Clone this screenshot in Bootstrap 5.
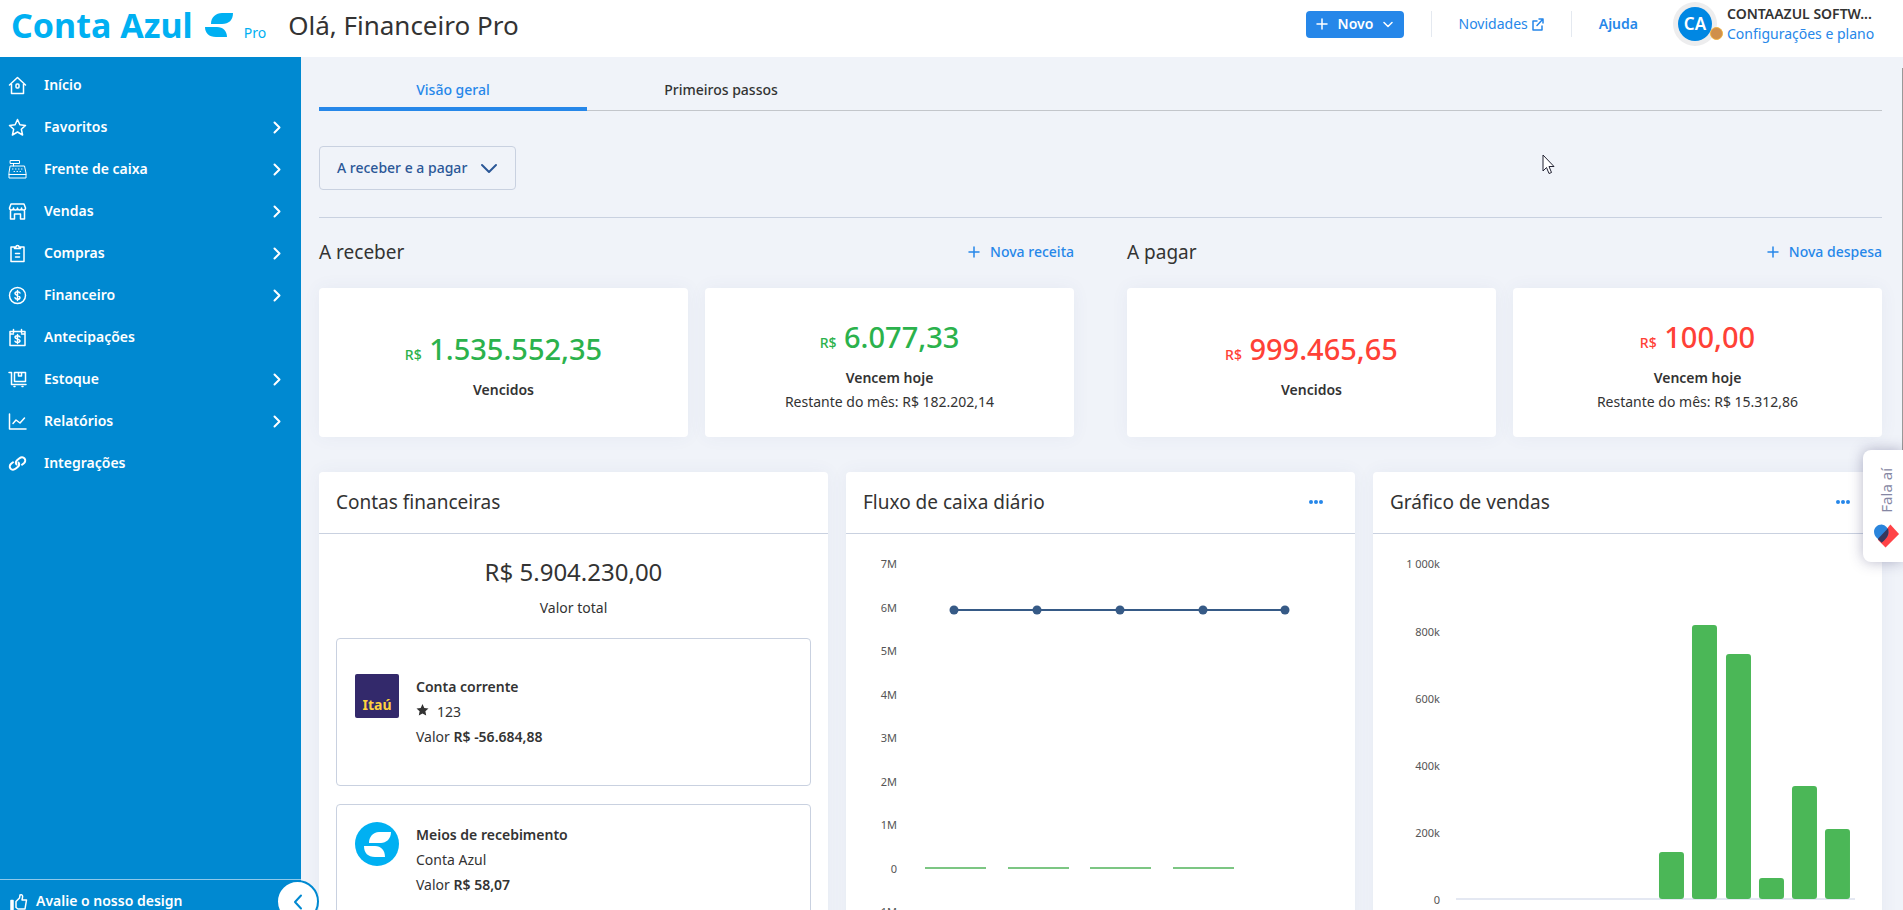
<!DOCTYPE html>
<html lang="pt-BR">
<head>
<meta charset="utf-8">
<meta name="viewport" content="width=device-width, initial-scale=1">
<title>Conta Azul Pro</title>
<link href="https://cdn.jsdelivr.net/npm/bootstrap@5.3.0/dist/css/bootstrap.min.css" rel="stylesheet">
<style>
  :root { --ca-blue:#2687e9; --ca-side:#0089d1; --ca-logo:#00b0f2; --ca-line:#c9d1e0; --ca-ink:#333; }
  body { font-family:"Noto Sans","Open Sans",sans-serif; font-size:14px; line-height:24px; color:var(--ca-ink); background:#f0f3f9; }
  a { color:var(--ca-blue); text-decoration:none; }
  svg { display:block; flex:none; }
  .ico { fill:none; stroke:currentColor; stroke-width:1.5; stroke-linecap:round; stroke-linejoin:round; }
  .ico.bold { stroke-width:2; }
  .ico.fine { stroke-width:1; }
  .topbar { height:57px; padding:0 21px 0 11px; background:#fff; }
  .brand { color:var(--ca-logo); height:50px; }
  .brand-name { font-size:34px; font-weight:700; line-height:50px; }
  .brand svg { margin-left:12px; }
  .brand-plan { font-size:14px; line-height:14px; margin:15px 0 0 11px; }
  .greeting { font-size:26px; line-height:50px; margin:0 0 0 22px; font-weight:400; }
  .top-tools { height:48px; }
  .btn-new { height:27px; width:98px; padding:0 10px; background:var(--ca-blue); color:#fff; font-size:14px; font-weight:600; line-height:20px; border-radius:4px; border:0; }
  .split { width:1px; height:26px; margin:0 27px; background:#e4e9f0; }
  .help { font-weight:600; margin-right:35px; }
  .avatar { width:44px; height:44px; border-radius:50%; background:#ededee; }
  .avatar-in { width:34px; height:34px; border-radius:50%; background:#0087e3; color:#fff; font-weight:600; font-size:17px; }
  .avatar-dot { width:13px; height:13px; right:-6px; bottom:6px; border-radius:50%; background:#cf8f4c; border:1px solid #f0b040; }
  .account { line-height:20px; width:155px; margin-left:10px; }
  .shell { min-height:0; }
  .sidebar { width:301px; background:var(--ca-side); }
  .side-nav { padding-top:7px; }
  .side-nav a { height:42px; padding:0 20px 0 8px; color:#fff; font-weight:600; gap:17px; }
  .side-foot { height:31px; border-top:1px solid #8fc9ea; padding:9px 0 0 9px; color:#fff; font-weight:600; gap:8px; }
  .side-foot a { color:#fff; }
  .collapse-btn { width:43px; height:43px; right:-18px; top:0; border-radius:50%; border:2px solid var(--ca-side); background:#fff; color:var(--ca-side); padding:0; z-index:3; }
  .content { padding:0 21px 0 18px; overflow-y:auto; scrollbar-width:none; }
  .content::-webkit-scrollbar { display:none; }
  .view-tabs { height:54px; border-bottom:1px solid #c3c6cb; }
  .view-tabs button { width:268px; height:54px; border:0; border-bottom:4px solid transparent; background:none; padding:15px 0 0; font-weight:500; color:var(--ca-ink); }
  .view-tabs button.current { color:var(--ca-blue); border-color:var(--ca-blue); }
  .btn-filter { height:44px; width:197px; margin:35px 0 27px; border:1px solid var(--ca-line); border-radius:4px; color:#2b5797; font-weight:500; font-size:14px; padding:0 17px; background:none; }
  .rule { height:1px; background:var(--ca-line); }
  .money-groups { gap:53px; margin-bottom:35px; }
  .group-head { height:70px; padding-bottom:2px; }
  .group-head h2, .panel-head h2 { font-size:19px; line-height:24px; font-weight:400; margin:0; }
  .group-head a { font-weight:500; gap:10px; }
  .money-cards { gap:17px; }
  .money-card { flex:1 1 0; height:149px; background:#fff; border-radius:4px; padding-top:7px; box-shadow:0 0 18px rgba(60,80,140,.06); }
  .amount { font-size:29px; line-height:36px; font-weight:500; margin-bottom:5px; }
  .amount span { font-size:14px; }
  .gain { color:#2bb24c; } .loss { color:#ff4136; }
  .panels { --bs-gutter-x:18px; }
  .panel { background:#fff; border-radius:4px; box-shadow:0 0 18px rgba(60,80,140,.06); min-height:560px; }
  .panel-head { height:62px; padding:0 30px 2px 17px; border-bottom:1px solid var(--ca-line); }
  .panel-head button { border:0; background:none; padding:0; color:var(--ca-blue); }
  .total { font-size:24px; line-height:32px; padding-top:22px; margin-bottom:8px; }
  .account-box { margin:18px 17px 0; border:1px solid var(--ca-line); border-radius:4px; padding:17px 18px; line-height:25px; gap:17px; }
  .account-box.roomy { padding:35px 18px 36px; }
  .bank { width:44px; height:44px; background:#33296b; color:#ffd23f; font:700 14px/18px "Noto Sans",sans-serif; border-radius:2px; padding-bottom:4px; }
  .chart text { font-size:11px; fill:#555; text-anchor:end; }
  .feedback { right:0; top:450px; width:40px; height:112px; background:#fff; border:0; border-radius:8px 0 0 8px; box-shadow:0 0 14px rgba(50,50,100,.35); padding:18px 0 14px 6px; color:#8587a3; font-size:15px; z-index:5; }
  .feedback span { writing-mode:vertical-rl; transform:rotate(180deg); }
  .thumb { right:0; top:68px; width:1px; height:382px; background:#999; }
  .pointer { left:1542px; top:154px; z-index:6; }
</style>
</head>
<body class="vh-100 d-flex flex-column overflow-hidden position-relative">
<header class="topbar d-flex align-items-start flex-shrink-0">
  <a class="brand d-flex align-items-center" href="#">
    <span class="brand-name">Conta Azul</span>
    <svg width="28" height="26" viewBox="0 0 28 26" fill="currentColor"><path d="M6 12C6 5 11 1 17 1h11c0 7-4 11-11 11zM0 15h12c6 0 10 4 10 10H11C4 25 0 21 0 15z"/></svg>
    <span class="brand-plan">Pro</span>
  </a>
  <h1 class="greeting">Olá, Financeiro Pro</h1>
  <div class="top-tools d-flex align-items-center ms-auto">
    <button class="btn-new d-flex align-items-center justify-content-between" type="button">
      <svg width="12" height="12" viewBox="0 0 12 12" class="ico"><path d="M6 1v10M1 6h10"/></svg>Novo
      <svg width="10" height="7" viewBox="0 0 10 7" class="ico"><path d="M1 1.500l4 4 4-4"/></svg>
    </button>
    <span class="split"></span>
    <a href="#" class="d-flex align-items-center gap-1">Novidades
      <svg width="12" height="13" viewBox="0 0 12 13" class="ico"><path d="M5 3H1v9h9V8M7 1h4v4M11 1L5 7.500"/></svg></a>
    <span class="split"></span>
    <a href="#" class="help">Ajuda</a>
    <span class="avatar d-flex align-items-center justify-content-center position-relative">
      <span class="avatar-in d-flex align-items-center justify-content-center">CA</span>
      <span class="avatar-dot position-absolute"></span>
    </span>
    <div class="account text-nowrap"><div class="fw-semibold">CONTAAZUL SOFTW...</div><a href="#">Configurações e plano</a></div>
  </div>
</header>

<div class="shell d-flex flex-grow-1">
  <aside class="sidebar d-flex flex-column flex-shrink-0">
    <nav class="side-nav flex-grow-1">
      <a href="#" class="d-flex align-items-center"><svg width="19" height="19" viewBox="0 0 19 19" class="ico"><path d="M1.500 9l8-7.500 8 7.500M3.500 8v9.500h12V8"/><rect x="8" y="8" width="3" height="4" rx="1"/></svg><span>Início</span></a>
      <a href="#" class="d-flex align-items-center"><svg width="19" height="19" viewBox="0 0 19 19" class="ico"><path d="M9.500 1.500l2.400 5.300 5.600.6-4.200 3.800 1.300 5.800-5.100-3-5.100 3 1.300-5.800L1.500 7.400l5.600-.6z"/></svg><span class="flex-grow-1">Favoritos</span><svg width="8" height="13" viewBox="0 0 8 13" class="ico bold"><path d="M1.500 1.500l5 5-5 5"/></svg></a>
      <a href="#" class="d-flex align-items-center"><svg width="19" height="19" viewBox="0 0 19 19" class="ico fine"><path d="M2.500 .5h9v3h-9zM5.500 3.500v2.500M2.500 6h14l1.500 7v5h-17v-5zM1 14.500h17M4.500 9h.5M7.500 9h.5M10.500 9h.5M13.500 9h.5M6 11.500h.5M9 11.500h.5M12 11.500h.5"/></svg><span class="flex-grow-1">Frente de caixa</span><svg width="8" height="13" viewBox="0 0 8 13" class="ico bold"><path d="M1.500 1.500l5 5-5 5"/></svg></a>
      <a href="#" class="d-flex align-items-center"><svg width="19" height="19" viewBox="0 0 19 19" class="ico"><path d="M3 2h13l1.500 4c0 1.500-1 2-2 2s-2-.5-2-2c0 1.500-1 2-2 2s-2-.5-2-2c0 1.500-1 2-2 2s-2-.5-2-2c0 1.500-1 2-2 2s-2-.5-2-2zM2.500 8.500v8.500h4v-5h6v5h4v-8.500"/></svg><span class="flex-grow-1">Vendas</span><svg width="8" height="13" viewBox="0 0 8 13" class="ico bold"><path d="M1.500 1.500l5 5-5 5"/></svg></a>
      <a href="#" class="d-flex align-items-center"><svg width="19" height="19" viewBox="0 0 19 19" class="ico"><path d="M6 3H3v14.500h13V3h-3M6.500 4.500V3h1.500c0-2 3-2 3 0h1.500v1.500zM7.500 9.500h4M7.500 13h4"/></svg><span class="flex-grow-1">Compras</span><svg width="8" height="13" viewBox="0 0 8 13" class="ico bold"><path d="M1.500 1.500l5 5-5 5"/></svg></a>
      <a href="#" class="d-flex align-items-center"><svg width="19" height="19" viewBox="0 0 19 19" class="ico"><circle cx="9.500" cy="9.500" r="8"/><path d="M12 7c-.5-1-1.300-1.300-2.500-1.300C8 5.700 7 6.300 7 7.500c0 2.500 5 1.500 5 4 0 1.200-1 1.800-2.500 1.800-1.300 0-2.200-.5-2.500-1.500M9.500 4.500v10"/></svg><span class="flex-grow-1">Financeiro</span><svg width="8" height="13" viewBox="0 0 8 13" class="ico bold"><path d="M1.500 1.500l5 5-5 5"/></svg></a>
      <a href="#" class="d-flex align-items-center"><svg width="19" height="19" viewBox="0 0 19 19" class="ico"><path d="M2 3.500h15v14H2zM5.500 1.500v3M13.500 1.500v3M2 6h3.500M13.500 6H17M12 9c-.5-1-1.300-1.200-2.500-1.200-1.500 0-2.500.5-2.500 1.500 0 2.300 5 1.400 5 3.500 0 1.200-1 1.600-2.500 1.600-1.300 0-2.200-.4-2.500-1.200M9.500 6.500v9"/></svg><span>Antecipações</span></a>
      <a href="#" class="d-flex align-items-center"><svg width="19" height="19" viewBox="0 0 19 19" class="ico"><path d="M1 2.500h2.500v12H18M6.500 2.500h11v9h-11zM10.500 2.500v3.500h3V2.500"/><path d="M6 16.500h1M14 16.500h1"/></svg><span class="flex-grow-1">Estoque</span><svg width="8" height="13" viewBox="0 0 8 13" class="ico bold"><path d="M1.500 1.500l5 5-5 5"/></svg></a>
      <a href="#" class="d-flex align-items-center"><svg width="19" height="19" viewBox="0 0 19 19" class="ico"><path d="M1.500 2v15H18M5 11.500l3-3.500 4 3 4.500-5"/></svg><span class="flex-grow-1">Relatórios</span><svg width="8" height="13" viewBox="0 0 8 13" class="ico bold"><path d="M1.500 1.500l5 5-5 5"/></svg></a>
      <a href="#" class="d-flex align-items-center"><svg width="19" height="19" viewBox="0 0 19 19" class="ico bold"><path d="M10.500 8.500c1.200 1.700.5 3.400-.8 4.500l-2.200 1.800c-1.600 1.300-3.800 1.200-5-.2s-.9-3.500.6-4.800L5 8.300"/><path d="M8.500 10.500c-1.200-1.700-.5-3.400.8-4.500l2.200-1.800c1.600-1.300 3.800-1.200 5 .2s.9 3.500-.6 4.800L14 10.700"/></svg><span>Integrações</span></a>
    </nav>
    <div class="side-foot d-flex position-relative">
      <svg class="mt-1" width="19" height="19" viewBox="0 0 19 19"><g class="ico"><path d="M7 8.500l3.500-3.500L11 2c2-1 3 .5 2.500 2.500L13 7h4.500l-1.500 9H9l-2-1.500z"/><path d="M2 7.500h2v9H2z" fill="currentColor"/></g></svg>
      <a href="#">Avalie o nosso design</a>
      <button class="collapse-btn position-absolute d-flex align-items-center justify-content-center" type="button" aria-label="Recolher menu"><svg width="10" height="16" viewBox="0 0 10 16" class="ico bold"><path d="M8 1.500L2 8l6 6.500"/></svg></button>
    </div>
  </aside>

  <main class="content flex-grow-1">
    <div class="view-tabs d-flex">
      <button type="button" class="current">Visão geral</button><button type="button">Primeiros passos</button>
    </div>
    <button class="btn-filter d-flex align-items-center justify-content-between" type="button">A receber e a pagar
      <svg width="18" height="11" viewBox="0 0 18 11" class="ico bold"><path d="M2 2l7 7 7-7"/></svg></button>
    <div class="rule"></div>

    <div class="money-groups d-flex">
      <section class="flex-fill w-50">
        <div class="group-head d-flex align-items-center justify-content-between"><h2>A receber</h2>
          <a href="#" class="d-flex align-items-center"><svg width="12" height="12" viewBox="0 0 12 12" class="ico"><path d="M6 1v10M1 6h10"/></svg>Nova receita</a></div>
        <div class="money-cards d-flex text-center">
          <div class="money-card d-flex flex-column justify-content-center"><div class="amount gain"><span>R$</span> 1.535.552,35</div><div class="fw-semibold">Vencidos</div></div>
          <div class="money-card d-flex flex-column justify-content-center"><div class="amount gain"><span>R$</span> 6.077,33</div><div class="fw-semibold">Vencem hoje</div><div>Restante do mês: R$ 182.202,14</div></div>
        </div>
      </section>
      <section class="flex-fill w-50">
        <div class="group-head d-flex align-items-center justify-content-between"><h2>A pagar</h2>
          <a href="#" class="d-flex align-items-center"><svg width="12" height="12" viewBox="0 0 12 12" class="ico"><path d="M6 1v10M1 6h10"/></svg>Nova despesa</a></div>
        <div class="money-cards d-flex text-center">
          <div class="money-card d-flex flex-column justify-content-center"><div class="amount loss"><span>R$</span> 999.465,65</div><div class="fw-semibold">Vencidos</div></div>
          <div class="money-card d-flex flex-column justify-content-center"><div class="amount loss"><span>R$</span> 100,00</div><div class="fw-semibold">Vencem hoje</div><div>Restante do mês: R$ 15.312,86</div></div>
        </div>
      </section>
    </div>

    <div class="row panels">
      <section class="col-4"><div class="panel">
        <div class="panel-head d-flex align-items-center"><h2>Contas financeiras</h2></div>
        <div class="text-center"><div class="total">R$ 5.904.230,00</div><div>Valor total</div></div>
        <div class="account-box roomy d-flex">
          <div class="bank d-flex align-items-end justify-content-center">Itaú</div>
          <div><div class="fw-semibold">Conta corrente</div>
            <div class="d-flex gap-2"><svg class="mt-1" width="13" height="14" viewBox="0 0 13 14" fill="#333"><path d="M6.500 1l1.800 3.900 4.200.5-3.100 2.900.8 4.200-3.700-2.100-3.700 2.100.8-4.200L.5 5.400l4.200-.5z"/></svg>123</div>
            <div>Valor <span class="fw-semibold">R$ -56.684,88</span></div></div>
        </div>
        <div class="account-box d-flex">
          <svg width="44" height="44" viewBox="0 0 44 44"><circle cx="22" cy="22" r="22" fill="#00b0f2"/><path fill="#fff" d="M14 21c0-6 4-11 10-11h12c0 7-5 11-10 11zM9 24h11c6 0 10 4 10 11H20c-7 0-11-4-11-11z"/></svg>
          <div><div class="fw-semibold">Meios de recebimento</div><div>Conta Azul</div><div>Valor <span class="fw-semibold">R$ 58,07</span></div></div>
        </div>
      </div></section>

      <section class="col-4"><div class="panel">
        <div class="panel-head d-flex align-items-center justify-content-between"><h2>Fluxo de caixa diário</h2>
          <button type="button" aria-label="Opções"><svg width="18" height="6" viewBox="0 0 18 6" fill="currentColor"><circle cx="4" cy="3" r="2"/><circle cx="9" cy="3" r="2"/><circle cx="14" cy="3" r="2"/></svg></button></div>
        <svg class="chart w-100" viewBox="0 0 509 400">
          <g><text x="51" y="34">7M</text><text x="51" y="78">6M</text><text x="51" y="121">5M</text><text x="51" y="165">4M</text><text x="51" y="208">3M</text><text x="51" y="252">2M</text><text x="51" y="295">1M</text><text x="51" y="339">0</text><text x="51" y="382">-1M</text></g>
          <path d="M79 334h61M162 334h61M244 334h61M327 334h61" stroke="#7cc683" stroke-width="2"/>
          <path d="M108 76h331" stroke="#365a86" stroke-width="2"/>
          <g fill="#365a86"><circle cx="108" cy="76" r="4.500"/><circle cx="191" cy="76" r="4.500"/><circle cx="274" cy="76" r="4.500"/><circle cx="357" cy="76" r="4.500"/><circle cx="439" cy="76" r="4.500"/></g>
        </svg>
      </div></section>

      <section class="col-4"><div class="panel">
        <div class="panel-head d-flex align-items-center justify-content-between"><h2>Gráfico de vendas</h2>
          <button type="button" aria-label="Opções"><svg width="18" height="6" viewBox="0 0 18 6" fill="currentColor"><circle cx="4" cy="3" r="2"/><circle cx="9" cy="3" r="2"/><circle cx="14" cy="3" r="2"/></svg></button></div>
        <svg class="chart w-100" viewBox="0 0 509 400">
          <g><text x="67" y="34">1 000k</text><text x="67" y="102">800k</text><text x="67" y="169">600k</text><text x="67" y="236">400k</text><text x="67" y="303">200k</text><text x="67" y="370">0</text></g>
          <path d="M83 365h399" stroke="#e4e8f2" stroke-width="2"/>
          <g fill="#4bb757"><rect x="286" y="318" width="25" height="47" rx="3"/><rect x="319" y="91" width="25" height="274" rx="3"/><rect x="353" y="120" width="25" height="245" rx="3"/><rect x="386" y="344" width="25" height="21" rx="3"/><rect x="419" y="252" width="25" height="113" rx="3"/><rect x="452" y="295" width="25" height="70" rx="3"/></g>
        </svg>
      </div></section>
    </div>
  </main>
</div>

<span class="thumb position-absolute"></span>
<button class="feedback position-absolute d-flex flex-column align-items-center justify-content-between" type="button"><span>Fala aí</span>
  <svg width="27" height="24" viewBox="0 0 28 24"><path fill="#ff4347" d="M18 0l9 10-14 14-8-8z"/><path fill="#2a85dc" d="M9 0a8 8 0 0 1 7 8c0 5-4 7-7 10L4 14C-2 8 2 0 9 0z"/><path fill="#37375c" d="M15.500 4L5 15l4 4c3-3 7-6 7-11 0-2 0-3-.5-4z"/></svg>
</button>
<svg class="pointer position-absolute" width="13" height="21" viewBox="0 0 13 21" aria-hidden="true"><path d="M1 1v16l3.500-3.500L7 19.500l2.500-1L7 12.500h5z" fill="#fff" stroke="#223"/></svg>
<script src="https://cdn.jsdelivr.net/npm/bootstrap@5.3.0/dist/js/bootstrap.bundle.min.js"></script>
</body>
</html>
